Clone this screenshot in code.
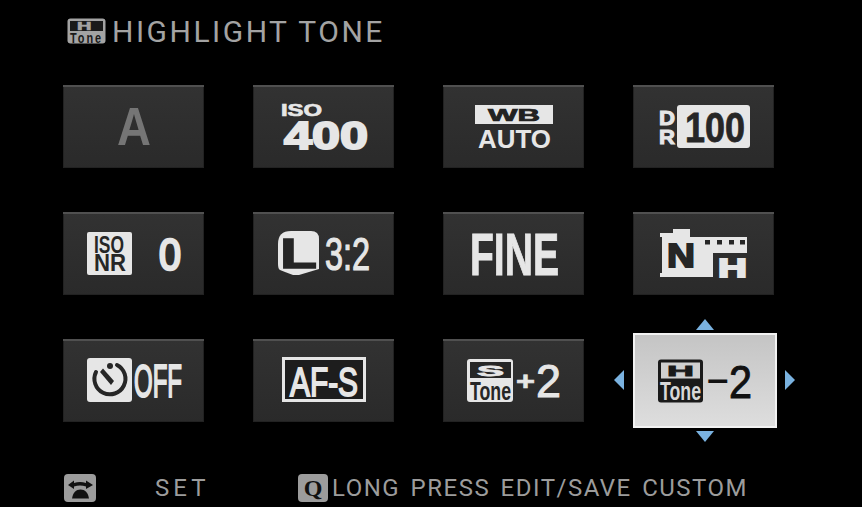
<script>
  // tile icons use tile-local coordinates
</script>

<div class="screen">
  <header class="title">
    <svg class="tone-ico" viewBox="0 0 39 26" width="39" height="26">
      <rect x="0.5" y="0.5" width="38" height="25" rx="3" fill="#a3a3a3" />
      <rect x="3" y="3" width="33" height="10" fill="#1a1a1a" />
      <text x="10" y="12" font-size="11" class="b" fill="#a3a3a3" stroke="#a3a3a3" stroke-width="0.6" textLength="19" lengthAdjust="spacingAndGlyphs">H</text>
      <text x="3" y="24.500" font-size="14" class="b" fill="#1a1a1a" textLength="33" lengthAdjust="spacingAndGlyphs">Tone</text>
    </svg>
    <span>HIGHLIGHT TONE</span>
  </header>

  <div class="grid">
    <div class="tile">
      <svg viewBox="0 0 141 83">
        <text x="54" y="60" font-size="53" class="b" fill="#757575" textLength="34" lengthAdjust="spacingAndGlyphs">A</text>
      </svg>
    </div>

    <div class="tile">
      <svg viewBox="0 0 141 83">
        <text x="28" y="31" font-size="17" class="b" fill="#e6e6e6" stroke="#e6e6e6" stroke-width="0.7" textLength="41" lengthAdjust="spacingAndGlyphs">ISO</text>
        <text x="31" y="64" font-size="39" class="b" fill="#e6e6e6" stroke="#e6e6e6" stroke-width="2" textLength="84" lengthAdjust="spacingAndGlyphs">400</text>
      </svg>
    </div>

    <div class="tile">
      <svg viewBox="0 0 141 83">
        <rect x="32" y="20" width="78" height="19" fill="#e6e6e6" />
        <text x="45" y="35.500" font-size="17" class="b" fill="#222" stroke="#222" stroke-width="0.7" textLength="52" lengthAdjust="spacingAndGlyphs">WB</text>
        <text x="35" y="63" font-size="26" class="b" fill="#e6e6e6" textLength="73" lengthAdjust="spacingAndGlyphs">AUTO</text>
      </svg>
    </div>

    <div class="tile">
      <svg viewBox="0 0 141 83">
        <text x="26" y="39.500" font-size="20" class="b" fill="#e6e6e6" stroke="#e6e6e6" stroke-width="1" textLength="16" lengthAdjust="spacingAndGlyphs">D</text>
        <text x="26" y="58.500" font-size="20" class="b" fill="#e6e6e6" stroke="#e6e6e6" stroke-width="1" textLength="16" lengthAdjust="spacingAndGlyphs">R</text>
        <rect x="44" y="20" width="73" height="43" rx="3" fill="#e6e6e6" />
        <text x="52" y="57" font-size="43" class="n" fill="#262626" stroke="#262626" stroke-width="0.8" textLength="60" lengthAdjust="spacingAndGlyphs">100</text>
      </svg>
    </div>

    <div class="tile">
      <svg viewBox="0 0 141 83">
        <rect x="24" y="20" width="45" height="43" rx="2" fill="#e6e6e6" />
        <text x="31" y="41" font-size="23" class="b" fill="#262626" textLength="30" lengthAdjust="spacingAndGlyphs">ISO</text>
        <text x="31" y="59" font-size="23" class="b" fill="#262626" textLength="32" lengthAdjust="spacingAndGlyphs">NR</text>
        <text x="96" y="58" font-size="44" class="nr" fill="#e6e6e6" stroke="#e6e6e6" stroke-width="2.600" textLength="22" lengthAdjust="spacingAndGlyphs">0</text>
      </svg>
    </div>

    <div class="tile">
      <svg viewBox="0 0 141 83">
        <path d="M38 19h20q8 0 8 8v30l-10 3-10 3h-6l-8-3-5-2q-2-1-2-6V32q0-13 13-13z" fill="#e6e6e6" />
        <text x="27" y="55.500" font-size="42" class="b" fill="#262626" stroke="#262626" stroke-width="1.400" textLength="37" lengthAdjust="spacingAndGlyphs">L</text>
        <text x="72" y="58" font-size="46" class="nr" fill="#e6e6e6" stroke="#e6e6e6" stroke-width="1.200" textLength="45" lengthAdjust="spacingAndGlyphs">3:2</text>
      </svg>
    </div>

    <div class="tile">
      <svg viewBox="0 0 141 83">
        <text x="27" y="62.500" font-size="59" class="n" fill="#e6e6e6" stroke="#e6e6e6" stroke-width="1" textLength="89" lengthAdjust="spacingAndGlyphs">FINE</text>
      </svg>
    </div>

    <div class="tile">
      <svg viewBox="0 0 141 83">
        <path d="M27 21h13v-4h17v8h57v16H80v24H27v-4h2V25h-2z" fill="#e6e6e6" />
        <rect x="72" y="28" width="5" height="4.500" fill="#262626" />
        <rect x="84" y="28" width="5" height="4.500" fill="#262626" />
        <rect x="96" y="28" width="5" height="4.500" fill="#262626" />
        <rect x="107" y="28" width="5" height="4.500" fill="#262626" />
        <text x="34" y="55" font-size="33" class="b" fill="#262626" stroke="#262626" stroke-width="1.800" textLength="28" lengthAdjust="spacingAndGlyphs">N</text>
        <text x="85" y="64.500" font-size="26" class="b" fill="#e6e6e6" stroke="#e6e6e6" stroke-width="1.800" textLength="29" lengthAdjust="spacingAndGlyphs">H</text>
      </svg>
    </div>

    <div class="tile">
      <svg viewBox="0 0 141 83">
        <rect x="24" y="19" width="45" height="44" rx="3" fill="#e6e6e6" />
        <path d="M54 26A15.500 15.500 0 1 1 33 33" fill="none" stroke="#262626" stroke-width="4" stroke-linecap="round" />
        <circle cx="47" cy="27" r="3" fill="#262626" />
        <path d="M37 33l3-3.500 11 12.500-3 4z" fill="#262626" />
        <text x="71" y="57.500" font-size="46" class="nr" fill="#e6e6e6" stroke="#e6e6e6" stroke-width="2" textLength="48" lengthAdjust="spacingAndGlyphs">OFF</text>
      </svg>
    </div>

    <div class="tile">
      <svg viewBox="0 0 141 83">
        <rect x="30.500" y="19.500" width="81" height="42" fill="#1d1d1d" stroke="#e6e6e6" stroke-width="3" />
        <text x="37" y="56.500" font-size="40" class="nr" fill="#e6e6e6" stroke="#e6e6e6" stroke-width="1.800" textLength="68" lengthAdjust="spacingAndGlyphs">AF-S</text>
      </svg>
    </div>

    <div class="tile">
      <svg viewBox="0 0 141 83">
        <rect x="24" y="20" width="46" height="43" rx="3" fill="#e6e6e6" />
        <rect x="27" y="23" width="41" height="16" fill="#262626" />
        <text x="34" y="36.500" font-size="15" class="b" fill="#e6e6e6" stroke="#e6e6e6" stroke-width="0.8" textLength="27" lengthAdjust="spacingAndGlyphs">S</text>
        <text x="27" y="60.500" font-size="26" class="n" fill="#262626" textLength="41" lengthAdjust="spacingAndGlyphs">Tone</text>
        <text x="73" y="50.500" font-size="25" class="b" fill="#e6e6e6" stroke="#e6e6e6" stroke-width="0.6" textLength="19" lengthAdjust="spacingAndGlyphs">+</text>
        <text x="93" y="58" font-size="47" class="nr" fill="#e6e6e6" stroke="#e6e6e6" stroke-width="1" textLength="25" lengthAdjust="spacingAndGlyphs">2</text>
      </svg>
    </div>

    <div class="tile selected">
      <svg viewBox="0 0 144 94">
        <rect x="25" y="26" width="45" height="43" rx="3" fill="#1a1a1a" />
        <rect x="28" y="29" width="39" height="16" fill="#d0d0d0" />
        <text x="34" y="42.500" font-size="15" class="b" fill="#1a1a1a" stroke="#1a1a1a" stroke-width="0.8" textLength="27" lengthAdjust="spacingAndGlyphs">H</text>
        <text x="27" y="66.500" font-size="26" class="n" fill="#d8d8d8" textLength="41" lengthAdjust="spacingAndGlyphs">Tone</text>
        <text x="74" y="58" font-size="32" class="b" fill="#111" textLength="22" lengthAdjust="spacingAndGlyphs">−</text>
        <text x="96" y="64" font-size="47" class="nr" fill="#111" stroke="#111" stroke-width="1" textLength="23" lengthAdjust="spacingAndGlyphs">2</text>
      </svg>
      <span class="arrow up"></span>
      <span class="arrow down"></span>
      <span class="arrow left"></span>
      <span class="arrow right"></span>
    </div>
  </div>

  <footer class="foot">
    <svg class="dial" viewBox="0 0 32 28" width="32" height="28">
      <rect width="32" height="28" rx="4" fill="#9c9c9c" />
      <path d="M4 11l6-4.500v2.500c4-1.200 8-1.200 12 0V6.500l7 4.500-7 4v-2.500c-4-1.200-8-1.200-12 0V15z" fill="#111" />
      <path d="M8 24.500c1-6 4-9 8.500-9s7.500 3 8.500 9z" fill="#111" />
    </svg>
    <span class="set">SET</span>
    <span class="q">Q</span>
    <span class="hint">LONG PRESS EDIT/SAVE CUSTOM</span>
  </footer>
</div>

<style>
  :global(body) {
    background: #000;
  }

  .screen {
    width: 862px;
    height: 507px;
    box-sizing: border-box;
    padding: 18px 0 0 63px;
    background: #000;
    overflow: hidden;
    font-family: Roboto, "Liberation Sans", Arial, sans-serif;
  }

  .title {
    display: flex;
    align-items: center;
    height: 26px;
    padding-left: 4px;
    gap: 6px;
    color: #a3a3a3;
    font-size: 30px;
    letter-spacing: 2.5px;
  }

  .tone-ico {
    overflow: visible;
  }

  .grid {
    display: grid;
    grid-template-columns: repeat(4, 141px);
    grid-auto-rows: 83px;
    column-gap: 49px;
    row-gap: 44px;
    margin-top: 41px;
  }

  .tile {
    position: relative;
    background: linear-gradient(#323232, #2a2a2a);
    box-shadow: inset 0 2px 0 #505050, inset 0 0 0 1px #222;
  }

  .tile svg {
    display: block;
    width: 100%;
    height: 100%;
    overflow: visible;
  }

  .tile.selected {
    margin: -6px -3px -6px 0;
    background: linear-gradient(#c4c4c4, #dedede);
    box-shadow: inset 0 0 0 2px #f2f2f2;
  }

  .arrow {
    position: absolute;
    width: 0;
    height: 0;
    border-style: solid;
    border-color: transparent;
  }

  .arrow.up {
    left: 63px;
    top: -14px;
    border-width: 0 9px 11px;
    border-bottom-color: #7ab2e0;
  }

  .arrow.down {
    left: 63px;
    bottom: -14px;
    border-width: 11px 9px 0;
    border-top-color: #7ab2e0;
  }

  .arrow.left {
    left: -19px;
    top: 37px;
    border-width: 10px 10px 10px 0;
    border-right-color: #7ab2e0;
  }

  .arrow.right {
    right: -18px;
    top: 37px;
    border-width: 10px 0 10px 10px;
    border-left-color: #7ab2e0;
  }

  .b {
    font-family: "Liberation Sans", Arial, sans-serif;
    font-weight: 700;
  }

  .n {
    font-family: "Liberation Sans Narrow", "Liberation Sans", Arial, sans-serif;
    font-weight: 700;
  }

  .nr {
    font-family: "Liberation Sans Narrow", "Liberation Sans", Arial, sans-serif;
    font-weight: 400;
  }

  .foot {
    display: flex;
    align-items: center;
    height: 28px;
    margin-top: 52px;
    padding-left: 1px;
    color: #9c9c9c;
    font-size: 24px;
    letter-spacing: 1.5px;
    word-spacing: 3px;
  }

  .set {
    width: 53px;
    margin-left: 59px;
    letter-spacing: 4px;
    white-space: nowrap;
  }

  .q {
    display: flex;
    align-items: center;
    justify-content: center;
    width: 30px;
    height: 28px;
    margin-left: 90px;
    border-radius: 4px;
    background: #9c9c9c;
    color: #111;
    font-family: "Liberation Serif", serif;
    font-weight: 700;
    font-size: 24px;
    letter-spacing: 0;
  }

  .hint {
    margin-left: 4px;
    white-space: nowrap;
  }
</style>
